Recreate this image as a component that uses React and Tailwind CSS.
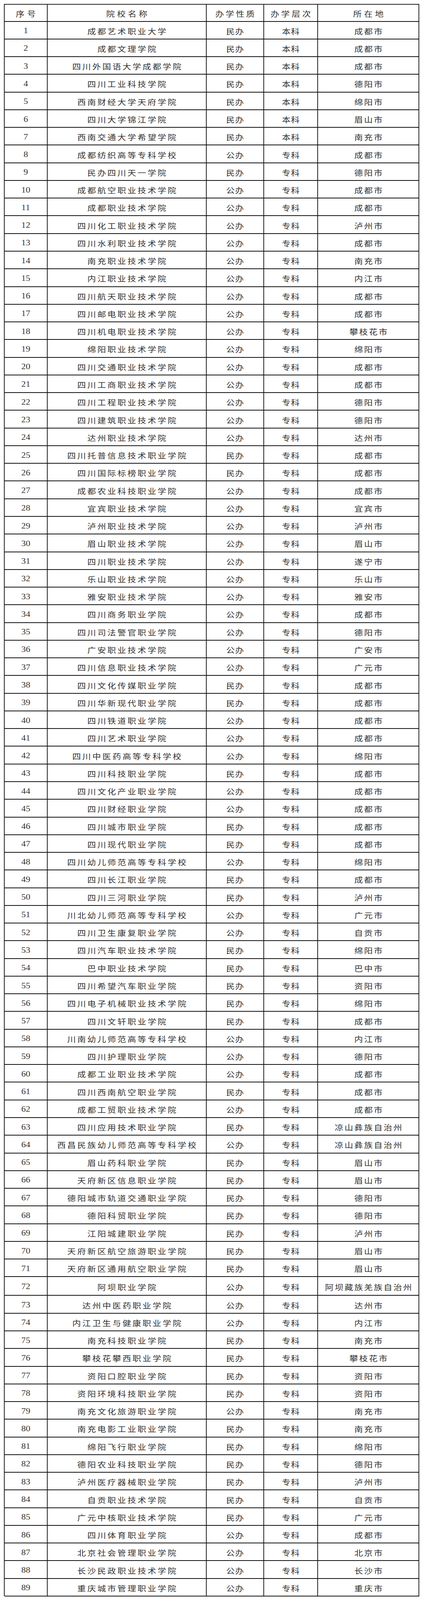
const rows = [
  ["成都艺术职业大学", "民办", "本科", "成都市"],
  ["成都文理学院", "民办", "本科", "成都市"],
  ["四川外国语大学成都学院", "民办", "本科", "成都市"],
  ["四川工业科技学院", "民办", "本科", "德阳市"],
  ["西南财经大学天府学院", "民办", "本科", "绵阳市"],
  ["四川大学锦江学院", "民办", "本科", "眉山市"],
  ["西南交通大学希望学院", "民办", "本科", "南充市"],
  ["成都纺织高等专科学校", "公办", "专科", "成都市"],
  ["民办四川天一学院", "民办", "专科", "德阳市"],
  ["成都航空职业技术学院", "公办", "专科", "成都市"],
  ["成都职业技术学院", "公办", "专科", "成都市"],
  ["四川化工职业技术学院", "公办", "专科", "泸州市"],
  ["四川水利职业技术学院", "公办", "专科", "成都市"],
  ["南充职业技术学院", "公办", "专科", "南充市"],
  ["内江职业技术学院", "公办", "专科", "内江市"],
  ["四川航天职业技术学院", "公办", "专科", "成都市"],
  ["四川邮电职业技术学院", "公办", "专科", "成都市"],
  ["四川机电职业技术学院", "公办", "专科", "攀枝花市"],
  ["绵阳职业技术学院", "公办", "专科", "绵阳市"],
  ["四川交通职业技术学院", "公办", "专科", "成都市"],
  ["四川工商职业技术学院", "公办", "专科", "成都市"],
  ["四川工程职业技术学院", "公办", "专科", "德阳市"],
  ["四川建筑职业技术学院", "公办", "专科", "德阳市"],
  ["达州职业技术学院", "公办", "专科", "达州市"],
  ["四川托普信息技术职业学院", "民办", "专科", "成都市"],
  ["四川国际标榜职业学院", "民办", "专科", "成都市"],
  ["成都农业科技职业学院", "公办", "专科", "成都市"],
  ["宜宾职业技术学院", "公办", "专科", "宜宾市"],
  ["泸州职业技术学院", "公办", "专科", "泸州市"],
  ["眉山职业技术学院", "公办", "专科", "眉山市"],
  ["四川职业技术学院", "公办", "专科", "遂宁市"],
  ["乐山职业技术学院", "公办", "专科", "乐山市"],
  ["雅安职业技术学院", "公办", "专科", "雅安市"],
  ["四川商务职业学院", "公办", "专科", "成都市"],
  ["四川司法警官职业学院", "公办", "专科", "德阳市"],
  ["广安职业技术学院", "公办", "专科", "广安市"],
  ["四川信息职业技术学院", "公办", "专科", "广元市"],
  ["四川文化传媒职业学院", "民办", "专科", "成都市"],
  ["四川华新现代职业学院", "民办", "专科", "成都市"],
  ["四川铁道职业学院", "公办", "专科", "成都市"],
  ["四川艺术职业学院", "公办", "专科", "成都市"],
  ["四川中医药高等专科学校", "公办", "专科", "绵阳市"],
  ["四川科技职业学院", "民办", "专科", "成都市"],
  ["四川文化产业职业学院", "公办", "专科", "成都市"],
  ["四川财经职业学院", "公办", "专科", "成都市"],
  ["四川城市职业学院", "民办", "专科", "成都市"],
  ["四川现代职业学院", "民办", "专科", "成都市"],
  ["四川幼儿师范高等专科学校", "公办", "专科", "绵阳市"],
  ["四川长江职业学院", "民办", "专科", "成都市"],
  ["四川三河职业学院", "民办", "专科", "泸州市"],
  ["川北幼儿师范高等专科学校", "公办", "专科", "广元市"],
  ["四川卫生康复职业学院", "公办", "专科", "自贡市"],
  ["四川汽车职业技术学院", "民办", "专科", "绵阳市"],
  ["巴中职业技术学院", "民办", "专科", "巴中市"],
  ["四川希望汽车职业学院", "民办", "专科", "资阳市"],
  ["四川电子机械职业技术学院", "民办", "专科", "绵阳市"],
  ["四川文轩职业学院", "民办", "专科", "成都市"],
  ["川南幼儿师范高等专科学校", "公办", "专科", "内江市"],
  ["四川护理职业学院", "公办", "专科", "德阳市"],
  ["成都工业职业技术学院", "公办", "专科", "成都市"],
  ["四川西南航空职业学院", "民办", "专科", "成都市"],
  ["成都工贸职业技术学院", "公办", "专科", "成都市"],
  ["四川应用技术职业学院", "民办", "专科", "凉山彝族自治州"],
  ["西昌民族幼儿师范高等专科学校", "公办", "专科", "凉山彝族自治州"],
  ["眉山药科职业学院", "民办", "专科", "眉山市"],
  ["天府新区信息职业学院", "民办", "专科", "眉山市"],
  ["德阳城市轨道交通职业学院", "民办", "专科", "德阳市"],
  ["德阳科贸职业学院", "民办", "专科", "德阳市"],
  ["江阳城建职业学院", "民办", "专科", "泸州市"],
  ["天府新区航空旅游职业学院", "民办", "专科", "眉山市"],
  ["天府新区通用航空职业学院", "民办", "专科", "眉山市"],
  ["阿坝职业学院", "公办", "专科", "阿坝藏族羌族自治州"],
  ["达州中医药职业学院", "公办", "专科", "达州市"],
  ["内江卫生与健康职业学院", "公办", "专科", "内江市"],
  ["南充科技职业学院", "民办", "专科", "南充市"],
  ["攀枝花攀西职业学院", "民办", "专科", "攀枝花市"],
  ["资阳口腔职业学院", "民办", "专科", "资阳市"],
  ["资阳环境科技职业学院", "民办", "专科", "资阳市"],
  ["南充文化旅游职业学院", "公办", "专科", "南充市"],
  ["南充电影工业职业学院", "民办", "专科", "南充市"],
  ["绵阳飞行职业学院", "民办", "专科", "绵阳市"],
  ["德阳农业科技职业学院", "民办", "专科", "德阳市"],
  ["泸州医疗器械职业学院", "民办", "专科", "泸州市"],
  ["自贡职业技术学院", "民办", "专科", "自贡市"],
  ["广元中核职业技术学院", "民办", "专科", "广元市"],
  ["四川体育职业学院", "公办", "专科", "成都市"],
  ["北京社会管理职业学院", "公办", "专科", "北京市"],
  ["长沙民政职业技术学院", "公办", "专科", "长沙市"],
  ["重庆城市管理职业学院", "公办", "专科", "重庆市"],
];

// table fills the window height; rows share it as the picture does
const cols = "grid grid-cols-[110fr_408fr_147fr_139fr_259fr]";
const cjk = "font-['Noto_Sans_CJK_SC',sans-serif] text-[22px] leading-none whitespace-nowrap";
const cell = "flex items-center justify-center min-h-0 overflow-hidden border-r-2 border-[#222] pt-[3px]";
const squash = "inline-block [transform:scaleY(0.877)]";

function Txt({ children, className }) {
  return <span className={`${squash} ${className}`}>{children}</span>;
}

export default function App() {
  return (
    <div className="flex h-screen min-h-0 w-full flex-col overflow-hidden bg-white pt-[0.2355vh] pb-[0.2355vh] pl-[10px] pr-[7px]">
      <div className="flex min-h-0 flex-1 flex-col border-t-2 border-l-2 border-[#222] text-[#333]">
        {/* Header */}
        <div className={`${cols} min-h-0 flex-[0.9686_1_0px] border-b-2 border-[#111]`}>
          <div className={`${cell} ${cjk}`}><Txt className="tracking-[7px] pl-[7px]">序号</Txt></div>
          <div className={`${cell} ${cjk}`}><Txt className="tracking-[5.7px] pl-[5.7px]">院校名称</Txt></div>
          <div className={`${cell} ${cjk}`}><Txt className="tracking-[4.3px] pl-[4.3px]">办学性质</Txt></div>
          <div className={`${cell} ${cjk}`}><Txt className="tracking-[5px] pl-[5px]">办学层次</Txt></div>
          <div className={`${cell} ${cjk}`}><Txt className="tracking-[6px] pl-[6px]">所在地</Txt></div>
        </div>

        {/* Rows */}
        {rows.map((r, i) => (
          <div
            key={i}
            className={`${cols} min-h-0 border-b-2 border-[#111] ${i === 71 ? "flex-[1.065_1_0px]" : "flex-[1_1_0px]"}`}
          >
            <div className={`${cell} font-['Liberation_Serif',serif] text-[23px] leading-none`}>
              <Txt>{i + 1}</Txt>
            </div>
            <div className={`${cell} ${cjk}`}><Txt className="tracking-[3.7px] pl-[3.7px]">{r[0]}</Txt></div>
            <div className={`${cell} ${cjk}`}><Txt className="tracking-[1px] pl-[1px]">{r[1]}</Txt></div>
            <div className={`${cell} ${cjk}`}><Txt className="tracking-[1px] pl-[1px]">{r[2]}</Txt></div>
            <div className={`${cell} ${cjk}`}><Txt className="tracking-[3px] pl-[3px]">{r[3]}</Txt></div>
          </div>
        ))}
      </div>
    </div>
  );
}
